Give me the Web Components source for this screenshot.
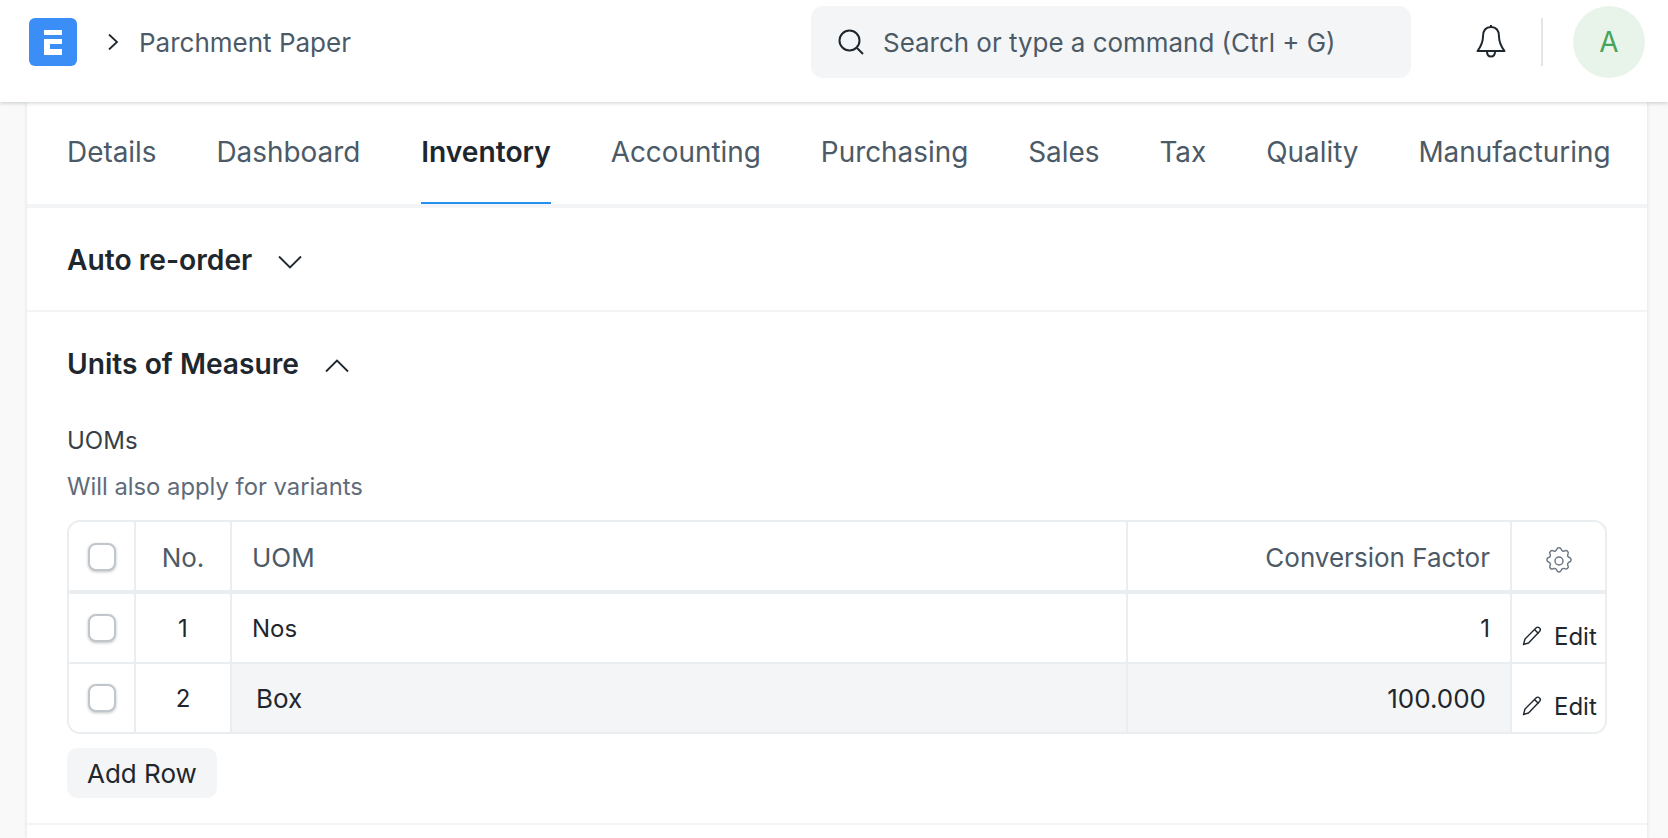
<!DOCTYPE html>
<html>
<head>
<meta charset="utf-8">
<title>Parchment Paper</title>
<style>
  html, body { margin: 0; height: 100%; overflow: hidden; }
  body { background: #f8f9f8; font-family: Inter, "Liberation Sans", sans-serif; color: #1f272e; }
</style>
</head>
<body>
<app-navbar></app-navbar>
<form-card>
  <form-tabs></form-tabs>
  <form-section heading="Auto re-order" collapsed></form-section>
  <form-section heading="Units of Measure">
    <uom-table></uom-table>
  </form-section>
</form-card>

<script>
class AppNavbar extends HTMLElement {
  constructor() {
    super();
    this.attachShadow({ mode: "open" }).innerHTML = /*html*/ `
      <style>
        :host {
          display: flex; align-items: center; box-sizing: border-box;
          height: 102px; padding: 0 23px 18px 29px; background: #fff;
          box-shadow: 0 1px 4px rgba(25, 39, 52, .22);
          position: relative; z-index: 2;
        }
        .logo { width: 48px; height: 48px; flex: none; }
        .crumb-sep { width: 16px; height: 16px; margin-left: 28px; flex: none; }
        .crumb { margin-left: 18px; font-size: 26px; color: #4c5a67; }
        .search {
          display: flex; align-items: center; box-sizing: border-box;
          width: 600px; height: 72px; margin-left: auto; padding-left: 26px;
          background: #f4f5f6; border-radius: 12px;
          font-size: 25.95px; color: #4c5a67;
        }
        .search svg { width: 28px; height: 28px; margin-right: 18px; flex: none; }
        .bell { width: 30px; height: 34px; margin: -2px 0 0 65px; flex: none; }
        .rule { width: 2px; height: 48px; margin-left: 35px; background: #e2e6e9; flex: none; }
        .avatar {
          display: flex; align-items: center; justify-content: center;
          width: 72px; height: 72px; margin-left: 30px; border-radius: 50%;
          background: #e8f3ea; color: #48a35a; font-size: 28px; flex: none;
        }
      </style>
      <svg class="logo" viewBox="0 0 48 48">
        <rect width="48" height="48" rx="6" fill="#3a8ef6"/>
        <path fill="#fff" d="M15 12h18v5H15zM15 21h18v5H21v5h12v6H15z"/>
      </svg>
      <svg class="crumb-sep" viewBox="0 0 16 16" fill="none" stroke="#1f272e" stroke-width="1.800">
        <path d="M4 0.500l8 7.500-8 7.500"/>
      </svg>
      <span class="crumb">Parchment Paper</span>
      <div class="search">
        <svg viewBox="0 0 28 28" fill="none" stroke="#1f272e" stroke-width="2">
          <circle cx="12.500" cy="12.500" r="10"/><path d="M20 20l6 6"/>
        </svg>
        Search or type a command (Ctrl + G)
      </div>
      <svg class="bell" viewBox="0 0 30 34" fill="none" stroke="#1f272e" stroke-width="2" stroke-linejoin="round">
        <path d="M15 3c-5.500 0-8 4-8 9.500 0 7-2.500 10.500-5.500 14.500h27c-3-4-5.500-7.500-5.500-14.500C23 7 20.500 3 15 3z"/>
        <path d="M11 27.500c0 3.500 2 5 4 5s4-1.500 4-5"/>
        <path d="M15 1v2"/>
      </svg>
      <span class="rule"></span>
      <span class="avatar">A</span>
    `;
  }
}

class FormCard extends HTMLElement {
  constructor() {
    super();
    this.attachShadow({ mode: "open" }).innerHTML = /*html*/ `
      <style>
        :host {
          display: block; width: 1620px; margin-left: 27px; background: #fff;
          height: 736px; overflow: hidden;
          box-shadow: 0 0 4px rgba(25, 39, 52, .12);
        }
      </style>
      <slot></slot>
    `;
  }
}

class FormTabs extends HTMLElement {
  constructor() {
    super();
    const tabs = ["Details", "Dashboard", "Inventory", "Accounting", "Purchasing", "Sales", "Tax", "Quality", "Manufacturing"];
    this.attachShadow({ mode: "open" }).innerHTML = /*html*/ `
      <style>
        :host {
          display: flex; gap: 59.9px; box-sizing: border-box; height: 106px;
          padding-left: 40px; border-bottom: 4px solid #f3f4f5;
          font-size: 27.9px; color: #4c5a67; white-space: nowrap;
        }
        span { display: flex; align-items: center; height: 102px; box-sizing: border-box; border-bottom: 2px solid transparent; }
        .active { color: #1f272e; font-size: 28.2px; font-weight: 600; border-bottom-color: #2490ef; margin-left: 1px; }
      </style>
      ${tabs.map(t => `<span class="${t === "Inventory" ? "active" : ""}">${t}</span>`).join("")}
    `;
  }
}

class FormSection extends HTMLElement {
  constructor() {
    super();
    const collapsed = this.hasAttribute("collapsed");
    this.attachShadow({ mode: "open" }).innerHTML = /*html*/ `
      <style>
        :host { display: block; padding: 0 40px; border-bottom: 2px solid #f3f4f5; }
        .head { display: flex; align-items: center; gap: 26px; height: 102px; font-size: 28.2px; font-weight: 600; color: #1f272e; }
        .head span { padding-top: 2px; }
        svg { width: 24px; height: 14px; margin-top: 5px; }
      </style>
      <div class="head">
        <span>${this.getAttribute("heading")}</span>
        <svg viewBox="0 0 24 14" fill="none" stroke="#1f272e" stroke-width="1.800">
          <path d="${collapsed ? "M1 1.500l11 11 11-11" : "M1 12.500l11-11 11 11"}"/>
        </svg>
      </div>
      <slot></slot>
    `;
  }
}

class UomTable extends HTMLElement {
  constructor() {
    super();
    const pencil = `<svg class="pencil" viewBox="0 0 20 20" fill="none" stroke="#1f272e" stroke-width="1.400" stroke-linejoin="round">
      <path d="M1.500 18.500l1.500-5.500L14 2c1-1 2.500-1 3.500 0s1 2.500 0 3.500L6.500 17z"/><path d="M12.500 3.500l4 4"/></svg>`;
    const box = `<span class="check"></span>`;
    const row = (no, uom, factor, active) => `
      <div class="row ${active ? "active" : ""}">
        <div class="cell center">${box}</div>
        <div class="cell center no">${no}</div>
        <div class="cell uom">${uom}</div>
        <div class="cell factor">${factor}</div>
        <div class="cell edit">${pencil}<span>Edit</span></div>
      </div>`;
    this.attachShadow({ mode: "open" }).innerHTML = /*html*/ `
      <style>
        :host { display: block; padding-bottom: 25px; font-size: 24px; color: #1f272e; }
        .label { margin-top: 12px; line-height: 30px; color: #383f47; font-size: 24px; }
        .hint { margin-top: 16px; margin-bottom: 18px; line-height: 30px; color: #5f6b78; font-size: 23.8px; }
        .grid { border: 2px solid #ebeef0; border-radius: 13px; overflow: hidden; }
        .row {
          display: grid; grid-template-columns: 67px 96px 896px 384px 1fr;
          box-sizing: border-box; height: 70px; border-top: 2px solid #ebeef0;
        }
        .row.head { height: 72px; border-top: 0; border-bottom: 4px solid #ebeef0; color: #4c5a67; font-size: 26px; }
        .row.head .cell:not(.cog) { padding-top: 2px; }
        .row.head + .row { border-top: 0; height: 68px; }
        .cell {
          display: flex; align-items: center; padding: 0 20px; box-sizing: border-box;
          border-right: 2px solid #ebeef0; white-space: nowrap; min-width: 0;
        }
        .cell:last-child { border-right: 0; }
        .center { justify-content: center; padding: 0; }
        .factor { justify-content: flex-end; }
        .active .uom, .active .factor { background: #f4f5f6; padding: 0 24px; font-size: 26px; }
        .edit { padding: 16px 0 0 10px; gap: 12px; }
        .cog { padding: 9px 0 0 0; justify-content: center; }
        .check {
          box-sizing: border-box; width: 28px; height: 28px; border-radius: 8px;
          border: 2px solid #c0c6cc; background: #fff; box-shadow: 0 1px 3px rgba(25, 39, 52, .28);
        }
        .pencil { width: 20px; height: 20px; }
        .gear { width: 32px; height: 32px; }
        .add {
          display: inline-flex; align-items: center; margin-top: 14px; height: 50px;
          padding: 0 20px; background: #f4f5f6; border-radius: 10px;
          font-size: 26px; color: #1f272e;
        }
      </style>
      <div class="label">UOMs</div>
      <div class="hint">Will also apply for variants</div>
      <div class="grid">
        <div class="row head">
          <div class="cell center">${box}</div>
          <div class="cell center">No.</div>
          <div class="cell">UOM</div>
          <div class="cell factor">Conversion Factor</div>
          <div class="cell cog">
            <svg class="gear" viewBox="0 0 24 24" fill="none" stroke="#6b7785" stroke-width="1.100" stroke-linejoin="round">
              <circle cx="12" cy="12" r="3"/>
              <path d="M10.300 3.300c.4-1.700 3-1.700 3.400 0a1.750 1.750 0 0 0 2.600 1.100c1.500-.9 3.300.8 2.400 2.400a1.750 1.750 0 0 0 1.100 2.600c1.700.4 1.700 3 0 3.400a1.750 1.750 0 0 0-1.100 2.600c.9 1.500-.8 3.300-2.400 2.400a1.750 1.750 0 0 0-2.600 1.100c-.4 1.700-3 1.700-3.400 0a1.750 1.750 0 0 0-2.600-1.100c-1.500.9-3.300-.8-2.400-2.400a1.750 1.750 0 0 0-1.100-2.600c-1.700-.4-1.700-3 0-3.400a1.750 1.750 0 0 0 1.100-2.600c-.9-1.500.8-3.300 2.400-2.400a1.750 1.750 0 0 0 2.600-1.100z"/>
            </svg>
          </div>
        </div>
        ${row(1, "Nos", "1", false)}
        ${row(2, "Box", "100.000", true)}
      </div>
      <div class="add">Add Row</div>
    `;
  }
}

customElements.define("app-navbar", AppNavbar);
customElements.define("form-card", FormCard);
customElements.define("form-tabs", FormTabs);
customElements.define("form-section", FormSection);
customElements.define("uom-table", UomTable);
</script>
</body>
</html>
